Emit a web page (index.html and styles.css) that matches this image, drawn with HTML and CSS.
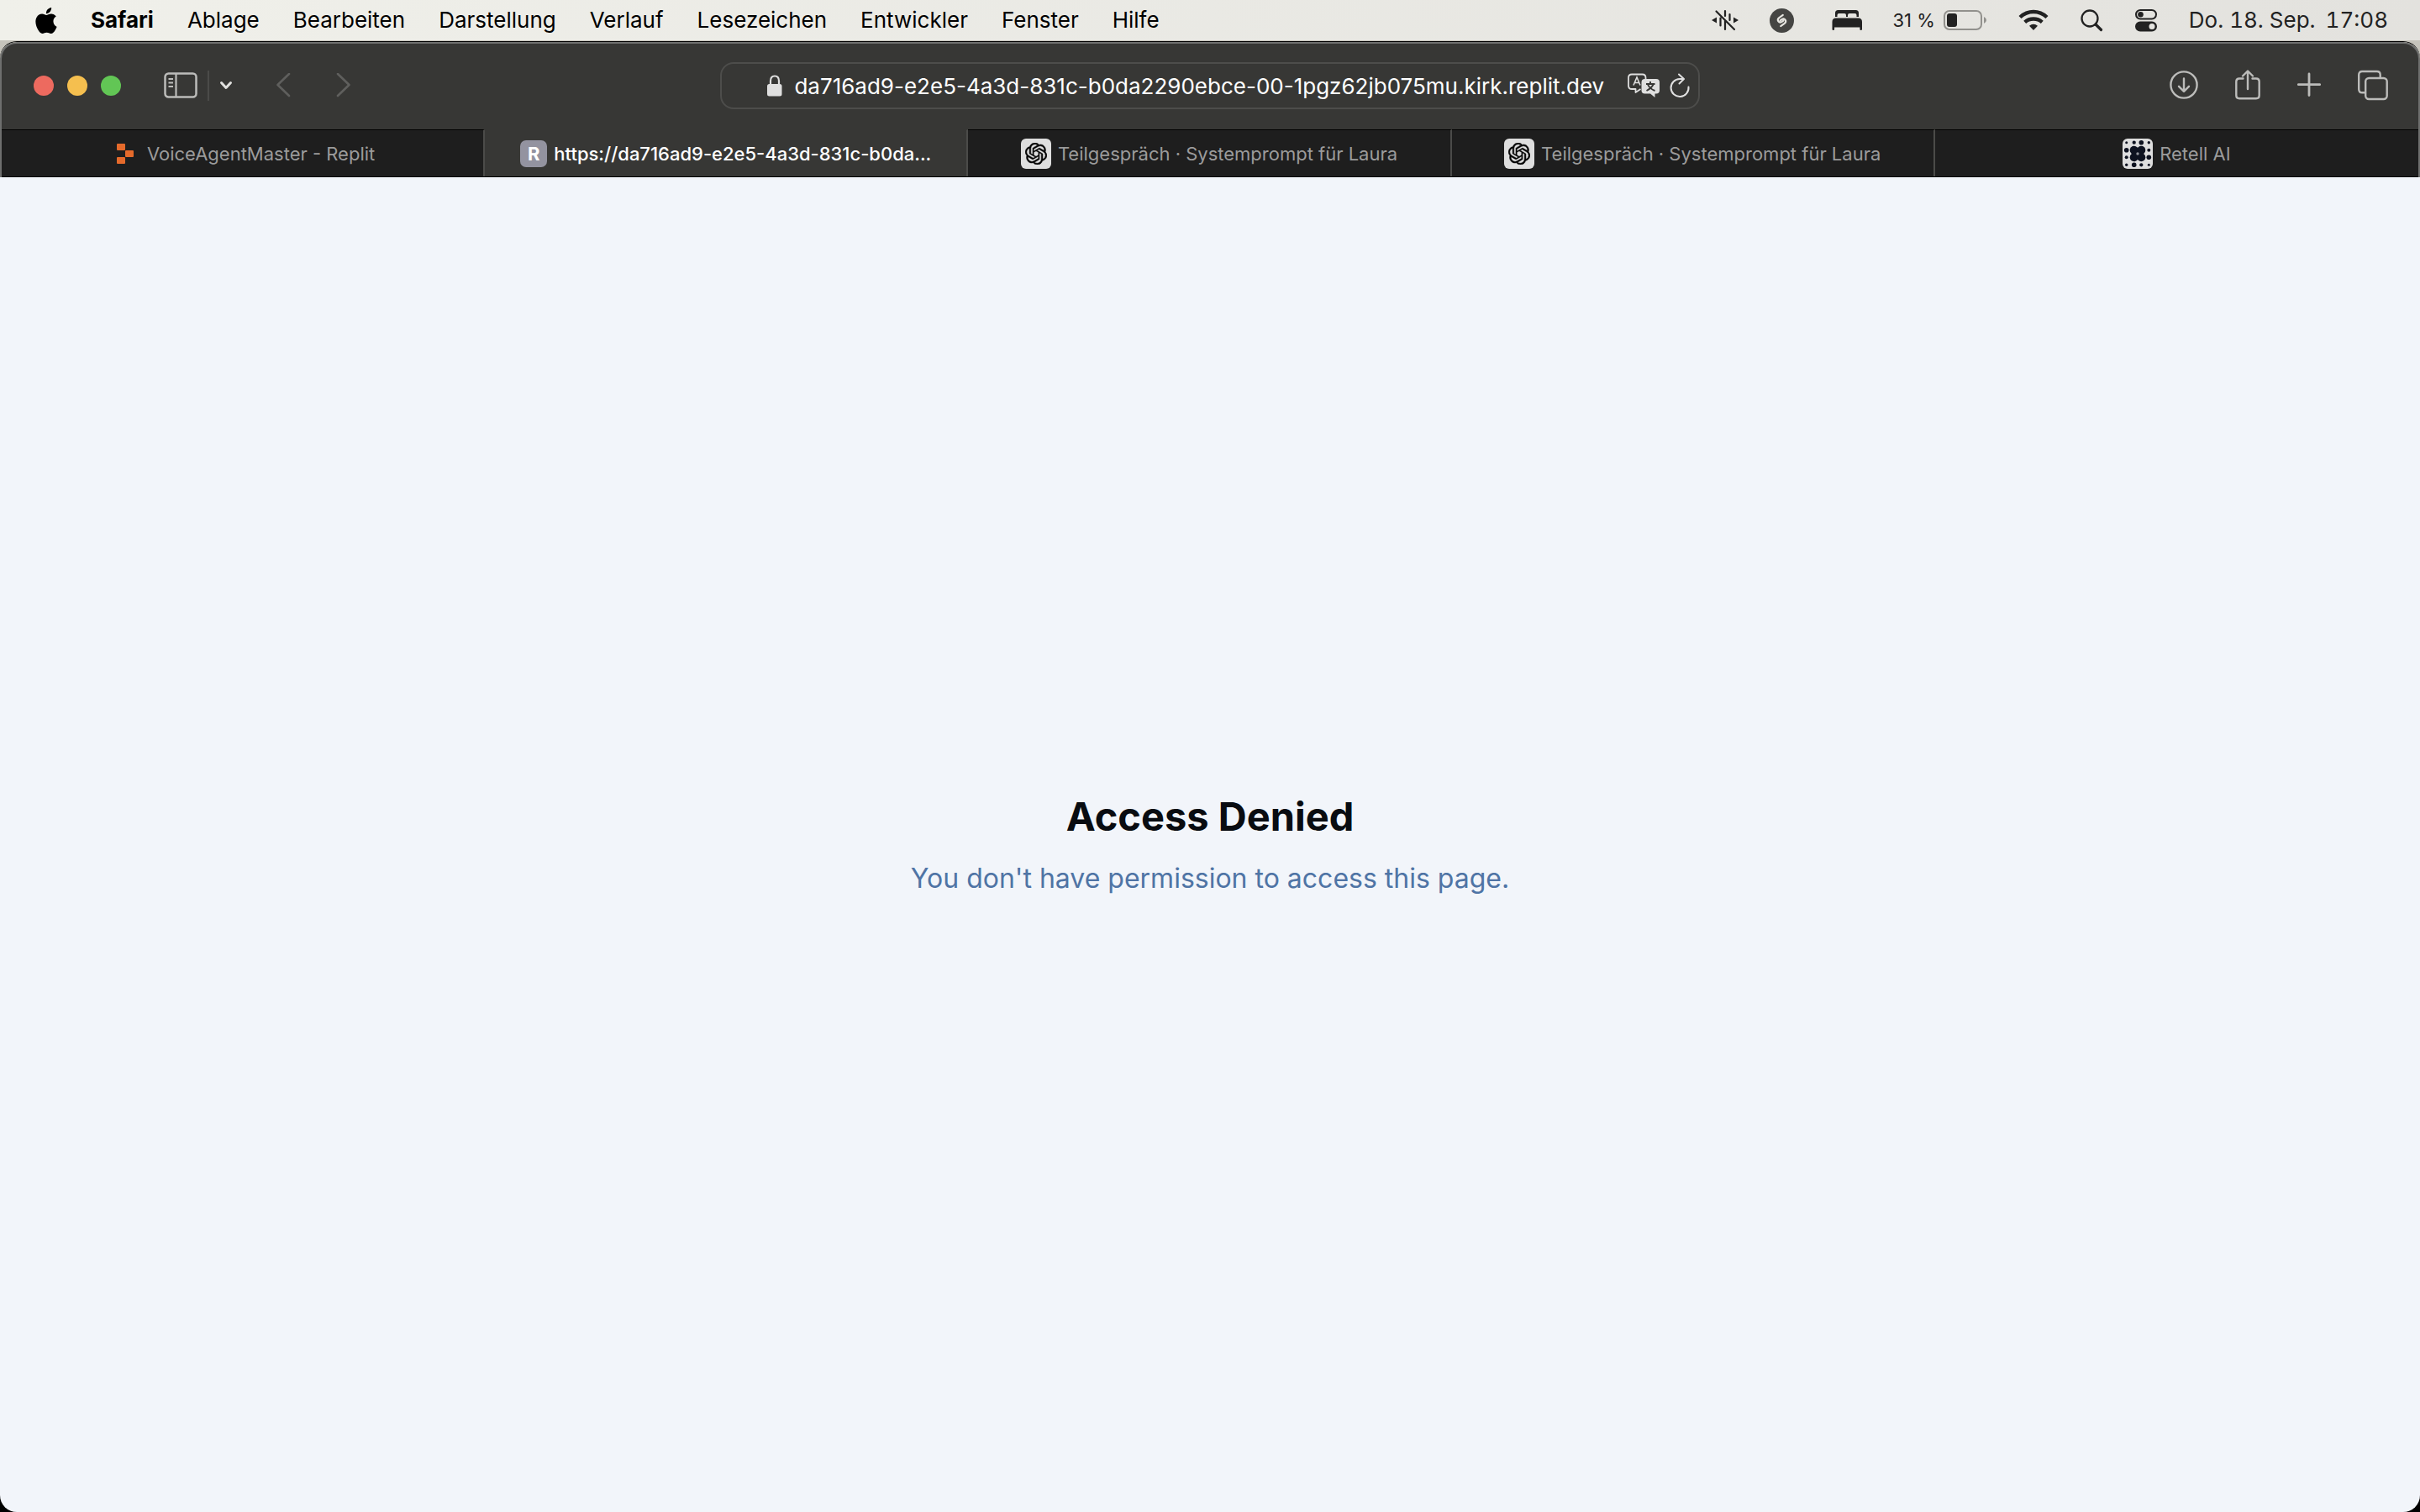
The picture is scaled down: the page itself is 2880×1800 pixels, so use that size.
FILE: index.html
```html
<!DOCTYPE html>
<html lang="de">
<head>
<meta charset="utf-8">
<title>Access Denied</title>
<link rel="stylesheet" href="styles.css">
</head>
<body>
<svg class="sprite" aria-hidden="true">
  <symbol id="openai" viewBox="0 0 24 24"><path d="M22.2819 9.8211a5.9847 5.9847 0 0 0-.5157-4.9108 6.0462 6.0462 0 0 0-6.5098-2.9A6.0651 6.0651 0 0 0 4.9807 4.1818a5.9847 5.9847 0 0 0-3.9977 2.9 6.0462 6.0462 0 0 0 .7427 7.0966 5.98 5.98 0 0 0 .511 4.9107 6.051 6.051 0 0 0 6.5146 2.9001A5.9847 5.9847 0 0 0 13.2599 24a6.0557 6.0557 0 0 0 5.7718-4.2058 5.9894 5.9894 0 0 0 3.9977-2.9001 6.0557 6.0557 0 0 0-.7475-7.0729zm-9.022 12.6081a4.4755 4.4755 0 0 1-2.8764-1.0408l.1419-.0804 4.7783-2.7582a.7948.7948 0 0 0 .3927-.6813v-6.7369l2.02 1.1686a.071.071 0 0 1 .038.052v5.5826a4.504 4.504 0 0 1-4.4945 4.4944zm-9.6607-4.1254a4.4708 4.4708 0 0 1-.5346-3.0137l.142.0852 4.783 2.7582a.7712.7712 0 0 0 .7806 0l5.8428-3.3685v2.3324a.0804.0804 0 0 1-.0332.0615L9.74 19.9502a4.4992 4.4992 0 0 1-6.1408-1.6464zM2.3408 7.8956a4.485 4.485 0 0 1 2.3655-1.9728V11.6a.7664.7664 0 0 0 .3879.6765l5.8144 3.3543-2.0201 1.1685a.0757.0757 0 0 1-.071 0l-4.8303-2.7865A4.504 4.504 0 0 1 2.3408 7.872zm16.5963 3.8558L13.1038 8.364 15.1192 7.2a.0757.0757 0 0 1 .071 0l4.8303 2.7913a4.4944 4.4944 0 0 1-.6765 8.1042v-5.6772a.79.79 0 0 0-.407-.667zm2.0107-3.0231l-.142-.0852-4.7735-2.7818a.7759.7759 0 0 0-.7854 0L9.409 9.2297V6.8974a.0662.0662 0 0 1 .0284-.0615l4.8303-2.7866a4.4992 4.4992 0 0 1 6.6802 4.66zM8.3065 12.863l-2.02-1.1638a.0804.0804 0 0 1-.038-.0567V6.0742a4.4992 4.4992 0 0 1 7.3757-3.4537l-.142.0805L8.704 5.459a.7948.7948 0 0 0-.3927.6813zm1.0976-2.3654l2.602-1.4998 2.6069 1.4998v2.9994l-2.5974 1.4997-2.6067-1.4997Z" stroke="#111" stroke-width=".5"/></symbol>
</svg>

<header class="menubar">
  <nav class="menus" aria-label="Menüleiste">
    <button class="menu apple" aria-label="Apple"><svg width="26" height="31" viewBox="2 0 20 24"><path d="M12.152 6.896c-.948 0-2.415-1.078-3.96-1.04-2.04.027-3.91 1.183-4.961 3.014-2.117 3.675-.546 9.103 1.519 12.09 1.013 1.454 2.208 3.09 3.792 3.039 1.52-.065 2.09-.987 3.935-.987 1.831 0 2.35.987 3.96.948 1.637-.026 2.676-1.48 3.676-2.948 1.156-1.688 1.636-3.325 1.662-3.415-.039-.013-3.182-1.221-3.22-4.857-.026-3.04 2.48-4.494 2.597-4.559-1.429-2.09-3.623-2.324-4.39-2.376-2-.156-3.675 1.09-4.61 1.09zM15.53 3.83c.843-1.012 1.4-2.427 1.245-3.83-1.207.052-2.662.805-3.532 1.818-.78.896-1.454 2.338-1.273 3.714 1.338.104 2.715-.688 3.559-1.701"/></svg></button>
    <button class="menu app">Safari</button>
    <button class="menu">Ablage</button>
    <button class="menu">Bearbeiten</button>
    <button class="menu">Darstellung</button>
    <button class="menu">Verlauf</button>
    <button class="menu">Lesezeichen</button>
    <button class="menu">Entwickler</button>
    <button class="menu">Fenster</button>
    <button class="menu">Hilfe</button>
  </nav>
  <div class="status">
    <svg width="32" height="26" viewBox="0 0 32 26"><path d="M0 13l6-3.400v6.800zM32 13l-6-3.400v6.800z"/><path d="M10.500 10.500v9M16 2v6M16 14v10M21.500 6v7M5.500 2.500L27 24" fill="none" stroke="#222" stroke-width="2.200" stroke-linecap="round"/></svg>
    <svg width="29" height="29" viewBox="0 0 29 29"><circle cx="14.500" cy="14.500" r="14.500" fill="#454543"/><path d="M15.800 7.800l-4.500 3.300c-3.400 2.700-.2 7.200 3.300 4.800l1.800-1.300M13.200 21.200l4.500-3.300c3.400-2.700.2-7.200-3.300-4.800l-1.800 1.300" fill="none" stroke="#e6e5e0" stroke-width="2.100" stroke-linecap="round"/></svg>
    <svg width="44" height="24" viewBox="0 0 44 24"><path d="M12 8V3.500Q12 0 15.500 0h21Q40 0 40 3.500V8h-2.500V6q0-2-2-2H29q-2 0-2 2v2h-2V6q0-2-2-2h-6.500q-2 0-2 2v2zM8.500 23V14q0-4.500 4.500-4.500h26.500q4.500 0 4.500 4.500v9q0 1-1.300 1t-1.300-1v-2.500h-30.300V23q0 1-1.300 1t-1.300-1z"/></svg>
    <div class="battery"><span>31 %</span>
      <svg width="52" height="24" viewBox="0 0 52 24"><rect x="1" y="1" width="44" height="22" rx="6" fill="none" stroke="#92918d" stroke-width="2"/><rect x="4" y="4" width="12" height="16" rx="3"/><path d="M48 8q3 1.500 3 4t-3 4z" fill="#92918d"/></svg></div>
    <svg width="36" height="26" viewBox="0 0 36 26"><g fill="none" stroke="#222" stroke-width="4.400"><path d="M2 9.500Q9 3 18 3t16 6.500M7.700 15.300Q12 11.500 18 11.500t10.300 3.800"/></g><path d="M18 25l-5-5.200q5-4 10 0z"/></svg>
    <svg width="28" height="28" viewBox="0 0 28 28" fill="none" stroke="#222"><circle cx="12" cy="12" r="9.500" stroke-width="2.300"/><path d="M19 19l6.500 6.500" stroke-width="3.200" stroke-linecap="round"/></svg>
    <svg width="28" height="28" viewBox="0 0 28 28"><rect x="2" y="2" width="24" height="10.500" rx="5.200" fill="none" stroke="#222" stroke-width="2"/><circle cx="7.500" cy="7.200" r="3.300"/><path fill-rule="evenodd" d="M7 15.500h14a6 6 0 0 1 0 12H7a6 6 0 0 1 0-12zm14 2.500a3.500 3.500 0 1 0 0 7 3.500 3.500 0 1 0 0-7z"/></svg>
    <div class="clock"><span>Do. 18. Sep.</span><time>17:08</time></div>
  </div>
</header>

<div class="window">
  <header class="chrome">
    <div class="toolbar">
      <div class="tools-left">
        <div class="lights">
          <button class="light close" aria-label="Schließen"></button>
          <button class="light minimize" aria-label="Minimieren"></button>
          <button class="light maximize" aria-label="Maximieren"></button>
        </div>
        <div class="sidebar-tools">
          <button class="tool" aria-label="Seitenleiste"><svg width="40" height="32" viewBox="0 0 40 32" fill="none" stroke="#bcbcba"><rect x="1.500" y="1.500" width="37" height="28" rx="4" stroke-width="2.500"/><path d="M14.500 2v27" stroke-width="2.200"/><path d="M5.500 8h5.500M5.500 12.500h5.500M5.500 17h5.500" stroke-width="1.800"/></svg></button>
          <span class="divider"></span>
          <button class="tool" aria-label="Tabgruppen"><svg width="16" height="12" viewBox="0 0 16 12"><path d="M2.500 2.500L8 8.500l5.500-6" fill="none" stroke="#e0e0de" stroke-width="3" stroke-linecap="round" stroke-linejoin="round"/></svg></button>
        </div>
        <div class="history">
          <button class="tool" aria-label="Zurück"><svg width="18" height="30" viewBox="0 0 18 30"><path d="M16 1L2.500 14 16 27" fill="none" stroke="#5f5f5d" stroke-width="2.600" stroke-linecap="round" stroke-linejoin="round"/></svg></button>
          <button class="tool" aria-label="Vorwärts"><svg width="18" height="30" viewBox="0 0 18 30"><path d="M2 1l13.500 13L2 27" fill="none" stroke="#5f5f5d" stroke-width="2.600" stroke-linecap="round" stroke-linejoin="round"/></svg></button>
        </div>
      </div>
      <form class="address">
        <svg width="18" height="26" viewBox="0 0 18 26"><path d="M4 12V7.500q0-6 5-6t5 6V12" fill="none" stroke="#dfdfdf" stroke-width="2.200"/><rect y="11" width="17.500" height="14.500" rx="2.500" fill="#dfdfdf"/></svg>
        <input class="url" type="text" aria-label="Adresse" value="da716ad9-e2e5-4a3d-831c-b0da2290ebce-00-1pgz62jb075mu.kirk.replit.dev">
        <button class="tool" type="button" aria-label="Übersetzen"><svg width="38" height="30" viewBox="0 0 38 30"><path d="M15.500 19l-6 4v-4H5q-4 0-4-4V5.500q0-4 4-4h12.500q4 0 4 4V7" fill="none" stroke="#dfdfdf" stroke-width="1.800" stroke-linejoin="round"/><path d="M7 14.500L11 5l4 9.500M8.500 11.500h5" fill="none" stroke="#dfdfdf" stroke-width="1.600"/><path d="M20.500 7H34q4 0 4 4v9.500q0 4-4 4h-1.500V29L27 24.500h-6.500q-4 0-4-4V11q0-4 4-4z" fill="#dfdfdf"/><path d="M27 10v2.500M22 13h10.500M30.500 13.500Q28.500 18 22.500 21M24 13.500q2 5 8.500 7.500" fill="none" stroke="#373735" stroke-width="1.900"/></svg></button>
        <button class="tool reload" type="button" aria-label="Neu laden"><svg width="24" height="30" viewBox="0 0 24 30" fill="none" stroke="#dfdfdf" stroke-width="2" stroke-linecap="round" stroke-linejoin="round"><path d="M22.500 16.500A10.500 10.500 0 1 1 12 7h4.500M11 1.500L17 7l-5.500 5.500"/></svg></button>
      </form>
      <div class="tools-right">
        <button class="tool" aria-label="Downloads"><svg width="34" height="38" viewBox="0 0 34 38" fill="none" stroke="#bcbcba" stroke-width="2.400" stroke-linecap="round" stroke-linejoin="round"><circle cx="17" cy="18" r="15.600"/><path d="M17 10.500v15M11 19.800l6 6 6-6"/></svg></button>
        <button class="tool" aria-label="Teilen"><svg width="30" height="38" viewBox="0 0 30 38" fill="none" stroke="#bcbcba" stroke-width="2.400" stroke-linecap="round" stroke-linejoin="round"><path d="M9.500 10.500H5q-3.700 0-3.700 3.700V30.500q0 3.700 3.700 3.700h20q3.700 0 3.700-3.700V14.200q0-3.700-3.700-3.700h-4.500M15 23V2M9 7.500l6-6 6 6"/></svg></button>
        <button class="tool" aria-label="Neuer Tab"><svg width="28" height="38" viewBox="0 0 28 38"><path d="M14 5v25.500M1.300 17.700h25.400" stroke="#bcbcba" stroke-width="2.800" stroke-linecap="round"/></svg></button>
        <button class="tool" aria-label="Tabübersicht"><svg width="36" height="38" viewBox="0 0 36 38" fill="none" stroke="#bcbcba" stroke-width="2.400"><rect x="9.200" y="10" width="25.500" height="25" rx="4"/><path d="M9 27.300H5.200q-4 0-4-4V6q0-4 4-4h17.500q4 0 4 4V10"/></svg></button>
      </div>
    </div>
    <nav class="tabs" aria-label="Tabs">
      <a class="tab" href="#"><svg width="36" height="36" viewBox="0 0 36 36" fill="#e56a2b"><rect x="8" y="6" width="10" height="8" rx="1"/><rect x="18" y="14" width="10" height="8" rx="1"/><rect x="8" y="22" width="10" height="8" rx="1"/></svg>VoiceAgentMaster - Replit</a>
      <a class="tab active" href="#"><span class="letter">R</span>https://da716ad9-e2e5-4a3d-831c-b0da...</a>
      <a class="tab" href="#"><span class="favicon"><svg width="26" height="26"><use href="#openai"/></svg></span>Teilgespräch · Systemprompt für Laura</a>
      <a class="tab" href="#"><span class="favicon"><svg width="26" height="26"><use href="#openai"/></svg></span>Teilgespräch · Systemprompt für Laura</a>
      <a class="tab" href="#"><span class="favicon"><svg width="36" height="36" viewBox="0 0 36 36" fill="#0d1220"><circle cx="4.700" cy="4.700" r="1.500"/><circle cx="13.700" cy="4.700" r="2.100"/><circle cx="22.300" cy="4.700" r="2.800"/><circle cx="31.300" cy="4.700" r="1.700"/><circle cx="4.700" cy="13.700" r="2.800"/><circle cx="13.700" cy="13.700" r="5"/><circle cx="22.300" cy="13.700" r="5"/><circle cx="31.300" cy="13.700" r="2"/><circle cx="4.700" cy="22.300" r="2"/><circle cx="13.700" cy="22.300" r="5"/><circle cx="22.300" cy="22.300" r="5"/><circle cx="31.300" cy="22.300" r="2.800"/><circle cx="4.700" cy="31.300" r="1.700"/><circle cx="13.700" cy="31.300" r="2.800"/><circle cx="22.300" cy="31.300" r="2.100"/><circle cx="31.300" cy="31.300" r="1.500"/><rect x="12" y="12" width="12" height="12"/><circle cx="18" cy="18" r="1.700" fill="#8f9299"/></svg></span>Retell AI</a>
    </nav>
  </header>
  <main class="page">
    <h1>Access Denied</h1>
    <p>You don't have permission to access this page.</p>
  </main>
</div>
</body>
</html>
```

FILE: styles.css
```css
* { box-sizing: border-box; }

body {
  margin: 0;
  min-height: 100vh;
  display: flex;
  flex-direction: column;
  font-family: Inter, "Liberation Sans", sans-serif;
  font-size: 26px;
  background: linear-gradient(#c6c4bc 50%, #000 50%);
}

button, input {
  margin: 0;
  padding: 0;
  border: 0;
  background: none;
  font: inherit;
  color: inherit;
}

svg { display: block; flex: none; }
.sprite { position: absolute; width: 0; height: 0; }

/* Menu bar */
.menubar {
  height: 48px;
  display: flex;
  align-items: center;
  justify-content: space-between;
  padding: 0 38px 0 42px;
  background: linear-gradient(90deg, #f0f0ea, #e3e2de);
}

.menus { display: flex; align-items: center; gap: 40px; }
.menu { line-height: 46px; white-space: nowrap; color: #000; }
.menu.app { font-weight: 700; }

.status { display: flex; align-items: center; gap: 37px; fill: #222; color: #222; }
.battery { display: flex; align-items: center; gap: 10px; font-size: 22px; }
.clock { display: flex; gap: 12px; line-height: 46px; font-variant-numeric: tabular-nums; white-space: nowrap; }

/* Browser window */
.window {
  flex: 1;
  display: flex;
  flex-direction: column;
  margin-top: 1px;
  overflow: hidden;
  border-top: 1px solid #000;
  border-radius: 20px;
}

.chrome {
  border: 2px solid #6e6f6e;
  border-bottom: 0;
  border-radius: 20px 20px 0 0;
  background: #373735;
}

.toolbar {
  height: 102px;
  display: grid;
  grid-template-columns: 1fr 41% 1fr;
  align-items: center;
  padding-bottom: 2px;
}

.tools-left { display: flex; align-items: center; padding-left: 38px; gap: 51px; }
.lights { display: flex; gap: 16px; }
.light { width: 24px; height: 24px; border-radius: 50%; }
.close { background: #ed6a5f; }
.minimize { background: #f5bf4f; }
.maximize { background: #62c655; }

.sidebar-tools { display: flex; align-items: center; gap: 12px; }
.divider { width: 2px; height: 36px; background: #4b4b49; }
.history { display: flex; gap: 54px; }

.address {
  height: 56px;
  display: flex;
  align-items: center;
  margin: 0 7px;
  padding: 0 10px 0 54px;
  border: 2px solid #4d4d4b;
  border-radius: 16px;
}
.url {
  flex: 1;
  min-width: 0;
  height: 48px;
  margin-left: 14px;
  font-size: 26px;
  color: #fff;
}
.reload { margin-left: 12px; }

.tools-right { display: flex; justify-content: flex-end; align-items: center; gap: 44px; padding-right: 36px; }

/* Tabs */
.tabs { display: grid; grid-template-columns: repeat(5, 1fr); border-bottom: 1px solid #000; }
.tab {
  height: 56px;
  display: flex;
  align-items: center;
  justify-content: center;
  gap: 8px;
  border-top: 1px solid #000;
  border-right: 2px solid #4b4b49;
  background: #1e1e1e;
  color: #9b9b9b;
  font-size: 22px;
  text-decoration: none;
  white-space: nowrap;
}
.tab:last-child { border-right: 0; }
.tab.active { background: #373735; border-top-color: #373735; color: #fff; font-weight: 500; }

.favicon, .letter { display: grid; place-items: center; flex: none; }
.favicon { width: 36px; height: 36px; border-radius: 6px; background: #dedede; }
.letter {
  width: 32px;
  height: 32px;
  border-radius: 7px;
  background: #9393a0;
  font-weight: 700;
}

/* Page */
.page {
  flex: 1;
  display: flex;
  flex-direction: column;
  align-items: center;
  justify-content: center;
  gap: 20px;
  background: #f2f5fa;
  text-align: center;
}
.page h1 { margin: 0; font-size: 47px; line-height: 60px; font-weight: 700; color: #090c11; }
.page p { margin: 0; font-size: 32px; line-height: 48px; color: #4f74a5; }
```
